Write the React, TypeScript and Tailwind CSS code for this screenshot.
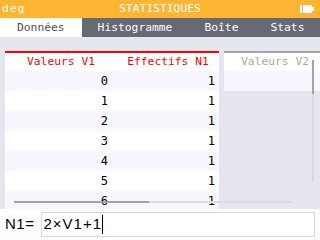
const values = [0, 1, 2, 3, 4, 5, 6];

const tabs = ["Données", "Histogramme", "Boîte", "Stats"];

function Battery() {
  return (
    <svg width="15" height="8" viewBox="0 0 15 8" className="block">
      <rect x="0" y="0" width="2" height="8" fill="#fff" />
      <rect x="3" y="0" width="9" height="8" fill="#fff" />
      <rect x="12" y="2" width="2" height="4" fill="#fff" />
    </svg>
  );
}

export default function App() {
  return (
    <div className="w-[320px] h-[240px] overflow-hidden flex flex-col font-['DejaVu_Sans_Mono',monospace] bg-[#e5e6ee]">
      {/* Title bar */}
      <div className="h-[18px] shrink-0 bg-[#ffb534] grid grid-cols-[1fr_auto_1fr] items-center text-white text-[11.3px] leading-none px-[2px]">
        <span className="tracking-[1px]">deg</span>
        <span>STATISTIQUES</span>
        <div className="flex justify-end pr-[3px]">
          <Battery />
        </div>
      </div>

      {/* Tabs */}
      <div className="h-[19px] shrink-0 flex bg-[#656a74] text-[11.3px] leading-none">
        {tabs.map((t, i) => (
          <div
            key={t}
            className={
              i === 0
                ? "px-[17px] flex items-center bg-white text-[#505050]"
                : "px-[16px] flex items-center text-white"
            }>
            {t}
          </div>
        ))}
      </div>

      {/* Table area */}
      <div className="relative flex-1 overflow-hidden flex gap-[5px] pl-[5px] pt-[14px] text-[11.3px] leading-none">
        <div className="w-[214px] shrink-0 border-t-2 border-[#f00] self-start">
          <div className="grid grid-cols-2 h-[18px] bg-white text-[#f00] items-center">
            <span className="text-center pl-[5px]">Valeurs V1</span>
            <span className="text-center pl-[5px]">Effectifs N1</span>
          </div>
          {values.map((v, i) => (
            <div
              key={v}
              className={
                "grid grid-cols-2 h-[20px] items-center text-black text-[12px] " +
                (i % 2 === 0 ? "bg-[#f6f8fd]" : "bg-white")
              }>
              <span className="text-right pr-[4px]">{v}</span>
              <span className="text-right pr-[4px]">1</span>
            </div>
          ))}
        </div>

        <div className="w-[107px] shrink-0 border-t-2 border-[#a5a5a5] self-start">
          <div className="h-[18px] bg-white text-[#a8a8a8] flex items-center justify-center pr-[5px]">
            Valeurs V2
          </div>
          <div className="h-[20px] bg-[#f6f8fd]" />
        </div>

        {/* vertical scrollbar */}
        <div className="absolute left-[312px] top-[23px] w-[2px] h-[121px] bg-[#d8d8dc]">
          <div className="h-[34px] bg-[#a3a3a3]" />
        </div>

        {/* horizontal scrollbar */}
        <div className="absolute left-[14px] top-[164px] w-[278px] h-[2px] bg-[#dcdcdf] flex">
          <div className="w-[135px] bg-[#a3a3a3]" />
        </div>
      </div>

      {/* Expression input */}
      <div className="h-[31px] shrink-0 bg-[#fdfdfd] flex items-center pl-[5px] pr-[5px] gap-[7px] font-['Liberation_Sans',sans-serif] text-[15px]">
        <span className="text-black tracking-[0.5px]">N1=</span>
        <div className="flex-1 h-[25px] border border-[#d8d8d8] bg-white flex items-center pl-[1px] text-black">
          <span className="tracking-[1px]">2×V1+1</span>
          <span className="w-px h-[19px] bg-black" />
        </div>
      </div>
    </div>
  );
}
